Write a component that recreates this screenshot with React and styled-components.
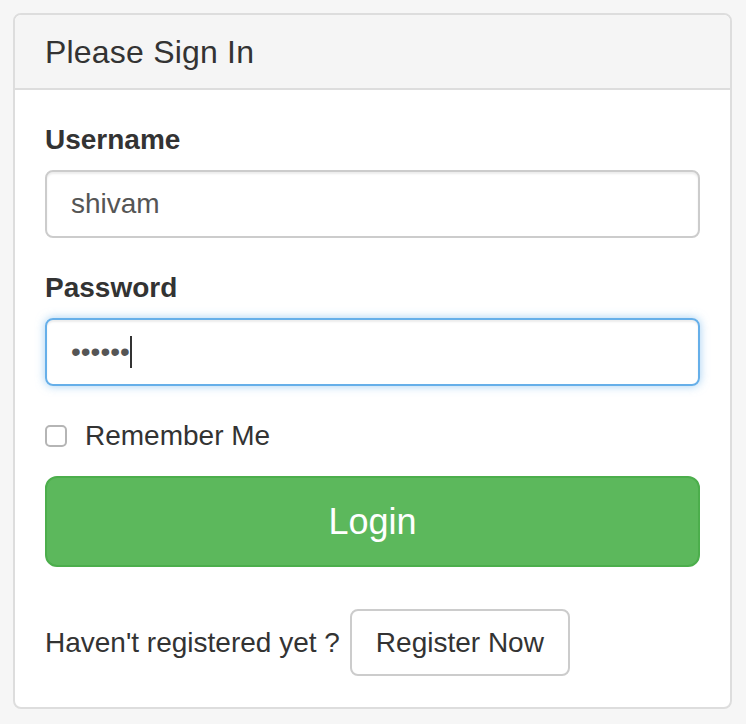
import styled, { createGlobalStyle } from "styled-components";

const GlobalStyle = createGlobalStyle`
  html, body {
    margin: 0;
    padding: 0;
    background: #f6f6f6;
  }
  body {
    font-family: "Liberation Sans", Arial, sans-serif;
    color: #333;
  }
`;

const Page = styled.div`
  padding: 13px 14px 15px 13px;
`;

const Panel = styled.div`
  background: #fff;
  border: 2px solid #dddddd;
  border-radius: 8px;
  overflow: hidden;
`;

const Heading = styled.div`
  background: #f5f5f5;
  border-bottom: 2px solid #dddddd;
  padding: 20px 30px 19px;
`;

const Title = styled.h3`
  margin: 0;
  font-size: 32px;
  font-weight: 400;
  letter-spacing: 0.2px;
  line-height: 34px;
  color: #333;
`;

const Body = styled.div`
  padding: 30px 30px 31px;
`;

const FormGroup = styled.div`
  margin-bottom: 30px;
`;

const Label = styled.label`
  display: block;
  font-size: 28px;
  font-weight: 700;
  line-height: 40px;
  margin-bottom: 10px;
`;

const Field = styled.div`
  display: flex;
  align-items: center;
  height: 64px;
  padding: 0 24px;
  border: 2px solid ${(p) => (p.$focused ? "#66afe9" : "#cccccc")};
  border-radius: 8px;
  font-size: 28px;
  color: #555;
  box-shadow: ${(p) =>
    p.$focused
      ? "inset 0 2px 2px rgba(0,0,0,.075), 0 0 10px rgba(102,175,233,.6)"
      : "inset 0 2px 2px rgba(0,0,0,.075)"};
`;

const Dots = styled.span`
  font-size: 28px;
  color: #555;
`;

const Caret = styled.span`
  display: inline-block;
  width: 2px;
  height: 32px;
  background: #333;
`;

const CheckRow = styled.label`
  display: flex;
  align-items: center;
  gap: 18px;
  height: 40px;
  margin-bottom: 20px;
  font-size: 28px;
`;

const Box = styled.span`
  width: 18px;
  height: 18px;
  border: 2px solid #b5b5b5;
  border-radius: 5px;
  background: #fff;
`;

const LoginButton = styled.button`
  display: block;
  width: 100%;
  height: 91px;
  background: #5cb85c;
  border: 2px solid #4cae4c;
  border-radius: 12px;
  color: #fff;
  font-family: "Liberation Sans", Arial, sans-serif;
  font-size: 36px;
  cursor: pointer;
`;

const Footer = styled.div`
  display: flex;
  align-items: center;
  gap: 10px;
  margin-top: 42px;
  font-size: 28px;
`;

const RegisterButton = styled.button`
  height: 67px;
  padding: 0 24px;
  background: #fff;
  border: 2px solid #cccccc;
  border-radius: 8px;
  color: #333;
  font-family: "Liberation Sans", Arial, sans-serif;
  font-size: 28px;
  cursor: pointer;
`;

export default function App() {
  return (
    <>
      <GlobalStyle />
      <Page>
        <Panel>
          <Heading>
            <Title>Please Sign In</Title>
          </Heading>
          <Body>
            <FormGroup>
              <Label>Username</Label>
              <Field>shivam</Field>
            </FormGroup>
            <FormGroup>
              <Label>Password</Label>
              <Field $focused>
                <Dots>••••••</Dots>
                <Caret />
              </Field>
            </FormGroup>
            <CheckRow>
              <Box />
              Remember Me
            </CheckRow>
            <LoginButton>Login</LoginButton>
            <Footer>
              <span>Haven't registered yet ?</span>
              <RegisterButton>Register Now</RegisterButton>
            </Footer>
          </Body>
        </Panel>
      </Page>
    </>
  );
}
